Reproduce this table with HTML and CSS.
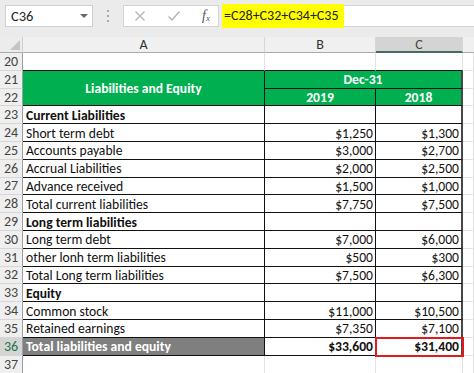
FILE: index.html
```html
<!DOCTYPE html>
<html>
<head>
<meta charset="utf-8">
<link rel="stylesheet" href="styles.css">
</head>
<body>
<div class="topbar">
  <div class="namebox"><span>C36</span><span class="caret"></span></div>
  <div class="dots"><i></i><i></i><i></i></div>
  <div class="fbtns">
    <svg class="ico" width="12" height="12" viewBox="0 0 12 12"><path d="M1.5 1.5L10.5 10.5M10.5 1.5L1.5 10.5" stroke="#b4b4b4" stroke-width="1.3" fill="none"/></svg>
    <svg class="ico" width="14" height="12" viewBox="0 0 14 12"><path d="M1.5 6.5L5 10L12.5 1.5" stroke="#b4b4b4" stroke-width="1.4" fill="none"/></svg>
    <span class="fx">f<sub>x</sub></span>
  </div>
  <div class="finput"><span class="formula">=C28+C32+C34+C35</span></div>
</div>
<div class="sheet">
  <div class="corner"><span class="tri"></span></div>
  <div class="colh">A</div>
  <div class="colh">B</div>
  <div class="colh csel">C</div>
  <div class="colh last"></div>

  <div class="rh">20</div><div class="g top"></div><div class="g top"></div><div class="g top"></div><div class="g"></div>

  <div class="rh">21</div><div class="cell green span-r">Liabilities and Equity</div><div class="cell green span-c edge">Dec-31</div><div class="g"></div>
  <div class="rh">22</div><div class="cell green">2019</div><div class="cell green edge">2018</div><div class="g"></div>

  <div class="rh">23</div><div class="cell bold">Current Liabilities</div><div class="cell"></div><div class="cell edge"></div><div class="g"></div>
  <div class="rh">24</div><div class="cell">Short term debt</div><div class="cell num">$1,250</div><div class="cell num edge">$1,300</div><div class="g"></div>
  <div class="rh">25</div><div class="cell">Accounts payable</div><div class="cell num">$3,000</div><div class="cell num edge">$2,700</div><div class="g"></div>
  <div class="rh">26</div><div class="cell">Accrual Liabilities</div><div class="cell num">$2,000</div><div class="cell num edge">$2,500</div><div class="g"></div>
  <div class="rh">27</div><div class="cell">Advance received</div><div class="cell num">$1,500</div><div class="cell num edge">$1,000</div><div class="g"></div>
  <div class="rh">28</div><div class="cell">Total current liabilities</div><div class="cell num">$7,750</div><div class="cell num edge">$7,500</div><div class="g"></div>
  <div class="rh">29</div><div class="cell bold">Long term liabilities</div><div class="cell"></div><div class="cell edge"></div><div class="g"></div>
  <div class="rh">30</div><div class="cell">Long term debt</div><div class="cell num">$7,000</div><div class="cell num edge">$6,000</div><div class="g"></div>
  <div class="rh">31</div><div class="cell">other lonh term liabilities</div><div class="cell num">$500</div><div class="cell num edge">$300</div><div class="g"></div>
  <div class="rh">32</div><div class="cell">Total Long term liabilities</div><div class="cell num">$7,500</div><div class="cell num edge">$6,300</div><div class="g"></div>
  <div class="rh">33</div><div class="cell bold">Equity</div><div class="cell"></div><div class="cell edge"></div><div class="g"></div>
  <div class="rh">34</div><div class="cell">Common stock</div><div class="cell num">$11,000</div><div class="cell num edge">$10,500</div><div class="g"></div>
  <div class="rh">35</div><div class="cell">Retained earnings</div><div class="cell num">$7,350</div><div class="cell num edge">$7,100</div><div class="g"></div>
  <div class="rh rsel">36</div><div class="cell dark">Total liabilities and equity</div><div class="cell num bold">$33,600</div><div class="cell num bold edge active">$31,400</div><div class="g"></div>

  <div class="rh">37</div><div class="g"></div><div class="g"></div><div class="g"></div><div class="g"></div>
</div>
</body>
</html>
```
FILE: styles.css
```css
body {
  margin: 0;
  width: 474px;
  height: 373px;
  overflow: hidden;
  background: #ffffff;
  font-family: "Carlito", "Lato", "Liberation Sans", sans-serif;
  color: #111;
}

.topbar {
  height: 37px;
  box-sizing: border-box;
  background: #ebebeb;
  display: flex;
  align-items: flex-start;
  padding: 5px 0 0 5px;
}

.namebox {
  width: 88px;
  height: 22px;
  box-sizing: border-box;
  background: #fff;
  border: 1px solid #cfcfcf;
  display: flex;
  align-items: center;
  justify-content: space-between;
  padding: 0 4px 0 5px;
  font-size: 14.5px;
  color: #222;
}

.caret {
  width: 0;
  height: 0;
  border-left: 4px solid transparent;
  border-right: 4px solid transparent;
  border-top: 4px solid #6a6a6a;
}

.dots {
  width: 30px;
  height: 22px;
  display: flex;
  flex-direction: column;
  align-items: center;
  justify-content: center;
  gap: 3px;
}

.dots i {
  display: block;
  width: 2px;
  height: 2px;
  background: #a8a8a8;
}

.fbtns {
  width: 96px;
  height: 22px;
  box-sizing: border-box;
  background: #fff;
  border: 1px solid #d4d4d4;
  display: flex;
  align-items: center;
  justify-content: space-between;
  padding: 0 8px 0 10px;
}

.fx {
  font-family: "Liberation Serif", serif;
  font-style: italic;
  font-size: 14px;
  color: #555;
  line-height: 1;
}

.fx sub {
  font-size: 9px;
  vertical-align: -1px;
}

.finput {
  flex: 1;
  height: 22px;
  box-sizing: border-box;
  background: #fff;
  border: 1px solid #d4d4d4;
  border-right: none;
  margin-left: 3px;
  display: flex;
  align-items: center;
}

.formula {
  background: #ffff00;
  height: 24px;
  line-height: 24px;
  margin-left: -1px;
  padding: 0 5px 0 2px;
  font-size: 14px;
  color: #222;
}

.sheet {
  display: grid;
  grid-template-columns: 23px 242px 111px 87px 11px;
  grid-template-rows: 16px repeat(17, 17.8px) 18px;
}

.corner {
  background: #ececec;
  border-right: 1px solid #d0d0d0;
  border-bottom: 1px solid #ababab;
  position: relative;
}

.tri {
  position: absolute;
  right: 2px;
  bottom: 2px;
  width: 0;
  height: 0;
  border-left: 10px solid transparent;
  border-bottom: 10px solid #c4c4c4;
}

.colh {
  background: #f0f0f0;
  border-right: 1px solid #d6d6d6;
  border-bottom: 1px solid #ababab;
  display: flex;
  align-items: center;
  justify-content: center;
  font-size: 14px;
  color: #333;
}

.colh.csel {
  background: #d4d4d4;
  border-bottom: 2px solid #3f6f58;
  color: #444;
}

.colh.last {
  border-right: none;
}

.rh {
  background: #efefef;
  border-right: 1px solid #9e9e9e;
  border-bottom: 1px solid #d6d6d6;
  display: flex;
  align-items: center;
  justify-content: center;
  font-size: 14px;
  color: #444;
}

.rh.rsel {
  background: #d4d4d4;
  color: #217346;
}

.g {
  border-right: 1px solid #e2e2e2;
  border-bottom: 1px solid #e2e2e2;
}

.g.top {
  border-bottom: 1px solid #111;
}

.cell {
  border-right: 1px solid #111;
  border-bottom: 1px solid #111;
  display: flex;
  align-items: center;
  padding: 1px 2px 0 3px;
  font-size: 13.6px;
  white-space: nowrap;
  overflow: visible;
  min-width: 0;
}

.cell.edge {
  border-right: 2px solid #474747;
}

.cell.num {
  justify-content: flex-end;
  padding-right: 2px;
}

.cell.bold {
  font-weight: bold;
}

.cell.green {
  background: #00b050;
  color: #fff;
  font-weight: bold;
  justify-content: center;
  padding: 0;
}

.span-r {
  grid-row: span 2;
}

.span-c {
  grid-column: span 2;
}

.cell.dark {
  background: #7f7f7f;
  color: #fff;
  font-weight: bold;
}

.cell.active {
  position: relative;
  z-index: 1;
  outline: 2px solid #e01b1b;
  outline-offset: -1px;
}
```
